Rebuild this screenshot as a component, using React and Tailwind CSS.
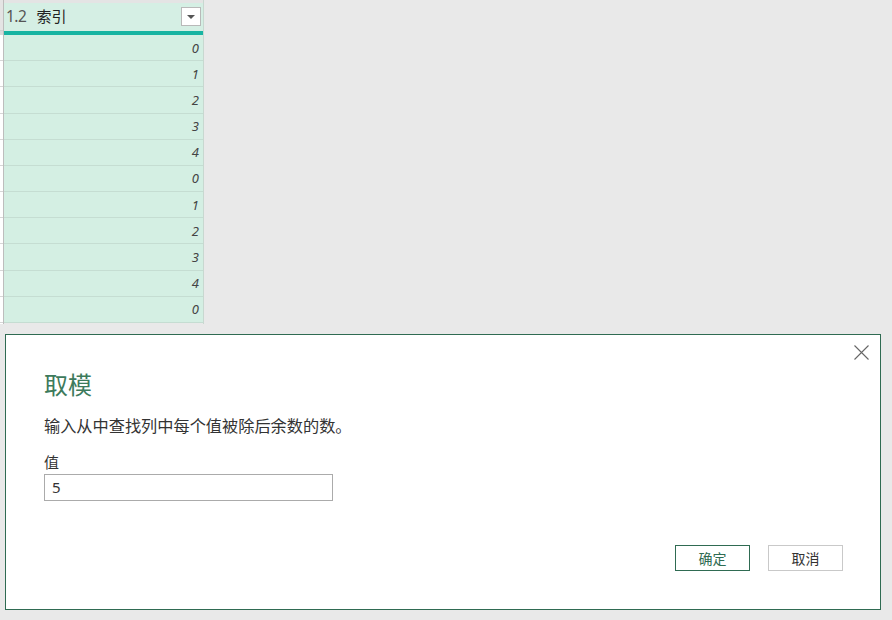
const values = [0, 1, 2, 3, 4, 0, 1, 2, 3, 4, 0];

const cjk = { fontFamily: '"Noto Sans CJK SC", sans-serif' };

export default function App() {
  return (
    <div
      className="w-[892px] h-[620px] bg-[#e9e9e9] flex flex-col overflow-hidden"
      style={{ fontFamily: '"Noto Sans", "Noto Sans CJK SC", sans-serif' }}
    >
      {/* Table */}
      <div className="flex h-[324px]">
        {/* previous column sliver */}
        <div className="w-[4px] flex flex-col bg-white border-r border-[#bdbdbd]">
          <div className="h-[31px] bg-[#e4e4e4] border-b border-[#d0d0d0]" />
          <div className="h-[4px] bg-[#dadada]" />
          {values.map((_, i) => (
            <div key={i} className="h-[26.18px] border-b border-[#d6d6d6]" />
          ))}
        </div>

        {/* index column */}
        <div className="w-[200px] flex flex-col border-r border-[#c8d8d0]">
          <div className="h-[31px] bg-[#d5efe4] border-t-[3px] border-t-[#e4e4e4] flex items-start pt-[4px] pl-[2px] pr-[2px]">
            <span className="mt-[2px] text-[15.5px] text-[#555] leading-none tracking-[-0.5px]">1.2</span>
            <span className="ml-[10px] mt-[1px] text-[15px] text-[#222] leading-none" style={cjk}>
              索引
            </span>
            <div className="ml-auto w-[20px] h-[19px] bg-white border border-[#b9b9b9] flex items-center justify-center">
              <div className="w-0 h-0 border-l-[4px] border-r-[4px] border-t-[4px] border-l-transparent border-r-transparent border-t-[#555]" />
            </div>
          </div>
          <div className="h-[4px] bg-[#17b4a2]" />
          {values.map((v, i) => (
            <div
              key={i}
              className="h-[26.18px] bg-[#d4efe3] border-b border-[#c5ddd2] flex items-center justify-end pr-[4px]"
            >
              <span className="mt-[1px] text-[13px] italic text-[#444] leading-none">{v}</span>
            </div>
          ))}
        </div>
      </div>

      {/* Dialog */}
      <div className="relative ml-[5px] mt-[10px] w-[876px] h-[276px] bg-white border border-[#2f6b52] flex flex-col pl-[38px] pr-[37px] pt-[37px]">
        <button className="absolute top-[10px] right-[11px]">
          <svg width="15" height="15" viewBox="0 0 15 15" stroke="#666" strokeWidth="1.1" fill="none">
            <path d="M0.5 0.5L14.5 14.5M14.5 0.5L0.5 14.5" />
          </svg>
        </button>

        <h1 className="text-[24px] leading-none text-[#3d7a5c] font-normal" style={cjk}>
          取模
        </h1>
        <p className="mt-[21px] text-[16.2px] leading-none text-[#333]" style={cjk}>
          输入从中查找列中每个值被除后余数的数。
        </p>
        <label className="mt-[21px] text-[15px] leading-none text-[#333]" style={cjk}>
          值
        </label>
        <div className="mt-[5px] w-[289px] h-[27px] border border-[#ababab] flex items-center px-[7px]">
          <span className="text-[15px] text-[#333] leading-none">5</span>
        </div>

        <div className="mt-[44px] flex justify-end gap-[18px]">
          <button
            className="w-[75px] h-[26px] border border-[#2f6b52] text-[#2f6b52] text-[14px] leading-none"
            style={cjk}
          >
            确定
          </button>
          <button
            className="w-[75px] h-[26px] border border-[#c9c9c9] text-[#333] text-[14px] leading-none"
            style={cjk}
          >
            取消
          </button>
        </div>
      </div>
    </div>
  );
}
